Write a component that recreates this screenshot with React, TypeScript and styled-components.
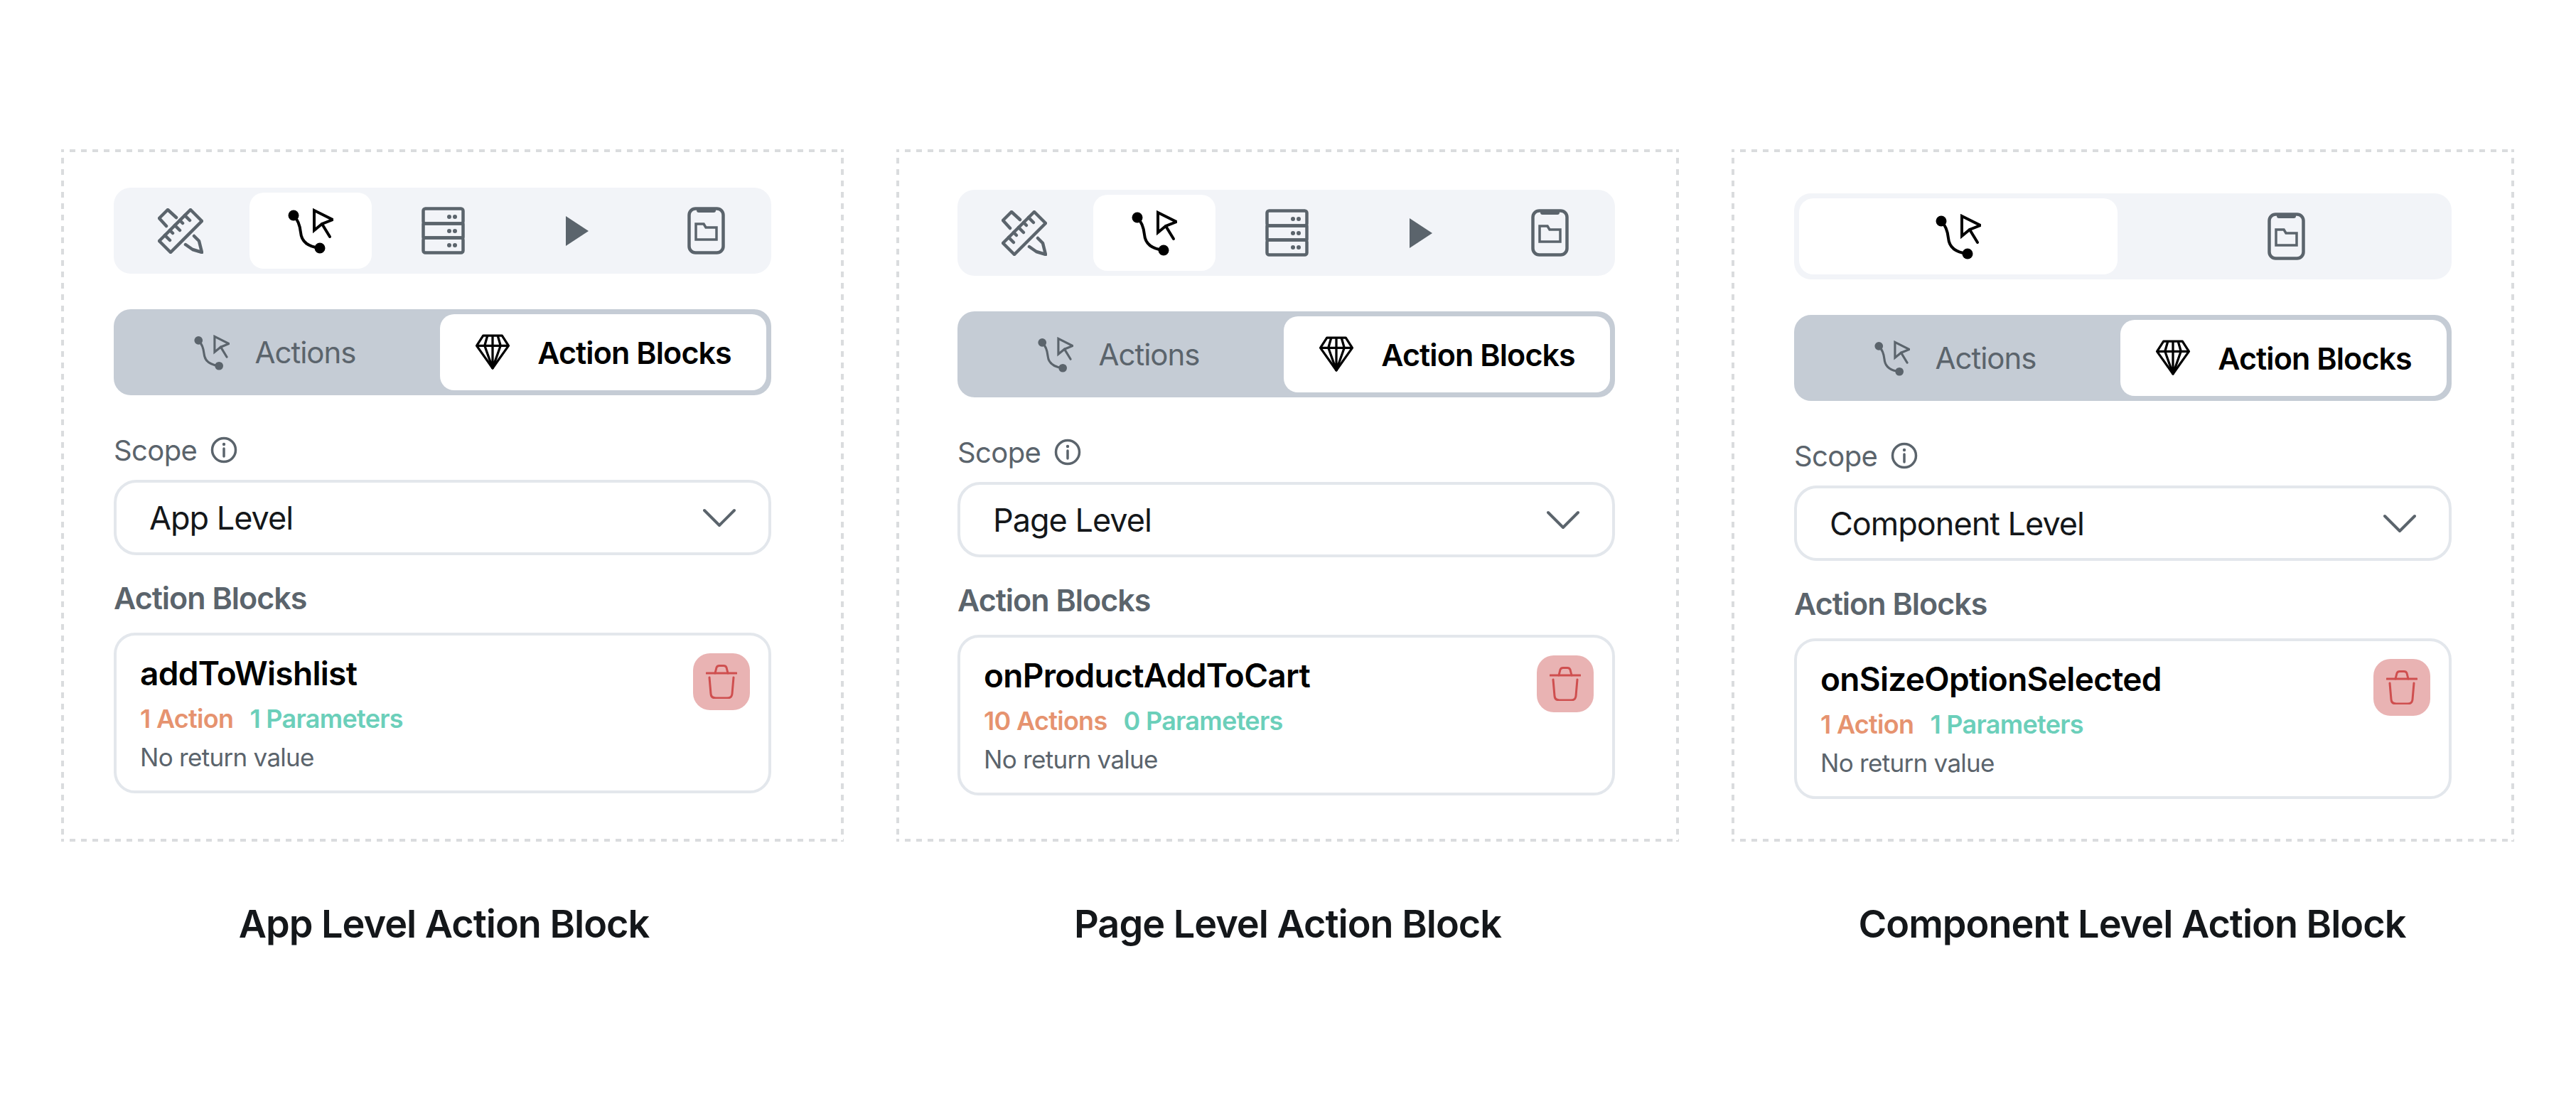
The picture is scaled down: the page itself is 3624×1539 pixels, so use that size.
import React from "react";
import styled, { createGlobalStyle } from "styled-components";

const Global = createGlobalStyle`
  html, body { margin: 0; padding: 0; background: #fff; }
  body { font-family: Inter, "Liberation Sans", sans-serif; width: 3624px; height: 1539px; overflow: hidden; }
`;

const Page = styled.div`
  display: flex;
  gap: 74px;
  padding: 210px 0 0 86px;
`;
const Column = styled.section`
  width: 1101px;
  display: flex;
  flex-direction: column;
`;
const Panel = styled.div<{ $pl: number; $pt: number }>`
  box-sizing: border-box;
  height: 974px;
  padding: ${(p) => p.$pt}px 0 0 ${(p) => p.$pl}px;
  display: flex;
  flex-direction: column;
  background:
    repeating-linear-gradient(90deg, #dadcde 0 4px, transparent 4px 12px, #dadcde 12px 16px) top / 100% 4px no-repeat,
    repeating-linear-gradient(90deg, #dadcde 0 4px, transparent 4px 12px, #dadcde 12px 16px) bottom / 100% 4px no-repeat,
    repeating-linear-gradient(180deg, #dadcde 0 4px, transparent 4px 12px, #dadcde 12px 16px) left / 4px 100% no-repeat,
    repeating-linear-gradient(180deg, #dadcde 0 4px, transparent 4px 12px, #dadcde 12px 16px) right / 4px 100% no-repeat;
`;
const Content = styled.div`
  width: 925px;
  display: flex;
  flex-direction: column;
`;
const Caption = styled.h2<{ $shift: number }>`
  margin: 81px 0 0 ${(p) => p.$shift}px;
  font-size: 54px;
  line-height: 70px;
  font-weight: 600;
  letter-spacing: -1px;
  color: #14171a;
  text-align: center;
`;
const Toolbar = styled.div`
  box-sizing: border-box;
  height: 121px;
  background: #f2f4f8;
  border-radius: 24px;
  padding: 7px 0 7px 8px;
  display: flex;
`;
const ToolbarTwo = styled(Toolbar)`
  padding: 7px;
  display: grid;
  grid-template-columns: 448px 1fr;
  gap: 11px;
`;
const Tab = styled.div<{ $active?: boolean; $ml?: number }>`
  width: ${(p) => (p.$ml === undefined ? "auto" : "172px")};
  margin-left: ${(p) => p.$ml ?? 0}px;
  flex: none;
  border-radius: 20px;
  background: ${(p) => (p.$active ? "#fff" : "transparent")};
  display: flex;
  align-items: center;
  justify-content: center;
`;
const Segmented = styled.div`
  box-sizing: border-box;
  height: 121px;
  margin-top: 50px;
  background: #c5ccd5;
  border-radius: 24px;
  padding: 7px;
  display: grid;
  grid-template-columns: 452px 1fr;
`;
const SegInactive = styled.div`
  display: flex;
  align-items: center;
  justify-content: center;
  gap: 35px;
  padding-right: 12px;
  font-size: 42px;
  font-weight: 400;
  letter-spacing: -1px;
  color: #5b646c;
`;
const SegActive = styled.div`
  display: flex;
  align-items: center;
  justify-content: center;
  gap: 38px;
  background: #fff;
  border-radius: 20px;
  font-size: 43px;
  font-weight: 600;
  letter-spacing: -0.9px;
  color: #000;
`;
const ScopeRow = styled.div`
  margin-top: 52px;
  height: 50px;
  display: flex;
  align-items: center;
  gap: 19px;
  font-size: 40px;
  letter-spacing: -0.6px;
  color: #5b646c;
`;
const Select = styled.div`
  box-sizing: border-box;
  height: 106px;
  margin-top: 17px;
  border: 4px solid #e3e7ec;
  border-radius: 32px;
  padding: 0 46px 0 46px;
  display: flex;
  align-items: center;
  justify-content: space-between;
  font-size: 45px;
  letter-spacing: -1px;
  color: #14171a;
`;
const SectionLabel = styled.div`
  margin-top: 35px;
  height: 50px;
  line-height: 50px;
  font-size: 43px;
  font-weight: 600;
  letter-spacing: -1px;
  color: #5b646c;
`;
const Card = styled.div`
  box-sizing: border-box;
  height: 226px;
  margin-top: 24px;
  border: 4px solid #e3e7ec;
  border-radius: 30px;
  padding: 23px 26px 0 33px;
  display: flex;
  justify-content: space-between;
  align-items: flex-start;
`;
const CardBody = styled.div`
  display: flex;
  flex-direction: column;
`;
const CardTitle = styled.div`
  font-size: 46px;
  line-height: 60px;
  font-weight: 600;
  letter-spacing: -0.7px;
  color: #000;
`;
const Stats = styled.div`
  margin-top: 12px;
  display: flex;
  gap: 23px;
  font-size: 36px;
  line-height: 44px;
  font-weight: 600;
  letter-spacing: -0.7px;
`;
const Stat = styled.span<{ $c: string }>`
  color: ${(p) => p.$c};
`;
const Note = styled.div`
  margin-top: 10px;
  font-size: 35px;
  line-height: 44px;
  letter-spacing: -0.7px;
  color: #5b646c;
`;
const Delete = styled.div`
  width: 80px;
  height: 80px;
  margin-top: 2px;
  border-radius: 24px;
  background: #e9b3b3;
  display: flex;
  align-items: center;
  justify-content: center;
`;

const RulerIcon = () => (
  <svg width="64" height="64" viewBox="0 0 64 64" fill="none" stroke="#5b646c" strokeWidth="4.5" strokeLinejoin="round" strokeLinecap="round">
    <path d="M46 2L62 18L18 62L2 46Z" />
    <path d="M38 10l7 7M31 17l4 4M24 24l7 7M17 31l4 4M10 38l7 7" />
    <path d="M12 25L2 14L14 2L26 13" />
    <path d="M51 39L58 46L62 62L49 58L39 51" />
  </svg>
);
const FlowIcon = ({ size = 64, color = "#000" }: { size?: number; color?: string }) => (
  <svg width={size} height={size} viewBox="0 0 64 64" fill="none" stroke={color} strokeWidth="4" strokeLinecap="round" strokeLinejoin="miter">
    <circle cx="8" cy="10" r="7.5" fill={color} stroke="none" />
    <circle cx="45" cy="56" r="7.5" fill={color} stroke="none" />
    <path d="M8 10C14 16 17 24 18 34C19 46 28 54 45 56" />
    <path d="M37 3L63 16L48 22L37 31Z" />
    <path d="M48 22L59 40" />
  </svg>
);
const ServerIcon = () => (
  <svg width="61" height="67" viewBox="0 0 61 67" fill="none" stroke="#5b646c" strokeWidth="4.5">
    <rect x="2.5" y="2.5" width="56" height="21" rx="3" />
    <rect x="2.5" y="23.5" width="56" height="20" rx="1" />
    <rect x="2.5" y="43.5" width="56" height="21" rx="3" />
    <g fill="#5b646c" stroke="none">
      <circle cx="39" cy="14" r="3" /><circle cx="47" cy="14" r="3" />
      <circle cx="39" cy="34" r="3" /><circle cx="47" cy="34" r="3" />
      <circle cx="39" cy="54" r="3" /><circle cx="47" cy="54" r="3" />
    </g>
  </svg>
);
const PlayIcon = () => (
  <svg width="32" height="42" viewBox="0 0 32 42"><path d="M0 0L32 21L0 42Z" fill="#5b646c" /></svg>
);
const PhoneIcon = () => (
  <svg width="53" height="67" viewBox="0 0 53 67" fill="none" stroke="#5b646c" strokeWidth="4.5">
    <rect x="2.5" y="2.5" width="48" height="62" rx="9" />
    <path d="M13 1H40V5Q40 8 37 8H16Q13 8 13 5Z" fill="#5b646c" stroke="none" />
    <path d="M12 24H23L26 29H41V46H12Z" strokeWidth="3.5" />
  </svg>
);
const DiamondIcon = () => (
  <svg width="50" height="51" viewBox="0 0 48 50" fill="none" stroke="#000" strokeWidth="3.2" strokeLinejoin="round">
    <path d="M11 2H37L46 16L24 47L2 16Z" />
    <path d="M2 16H46M17 2L13 16L24 47L35 16L31 2M24 2V47" />
  </svg>
);
const InfoIcon = () => (
  <svg width="38" height="38" viewBox="0 0 38 38" fill="none" stroke="#5b646c" strokeWidth="3.5" strokeLinecap="round">
    <circle cx="19" cy="19" r="16.5" />
    <path d="M19 17V28" />
    <circle cx="19" cy="11" r="2.2" fill="#5b646c" stroke="none" />
  </svg>
);
const ChevronIcon = () => (
  <svg width="46" height="27" viewBox="0 0 46 27" fill="none" stroke="#5b646c" strokeWidth="4" strokeLinecap="round" strokeLinejoin="round">
    <path d="M2 3L23 24L44 3" />
  </svg>
);
const TrashIcon = () => (
  <svg width="44" height="48" viewBox="0 0 44 48" fill="none" stroke="#cf4f4f" strokeWidth="3" strokeLinecap="round" strokeLinejoin="round">
    <path d="M1 12H43" />
    <path d="M13 12L15 4Q16 1.5 19 1.5H25Q28 1.5 29 4L31 12" />
    <path d="M5 18L7 41Q7.5 47 14 47H30Q36.5 47 37 41L39 18" />
  </svg>
);

type Data = {
  caption: string;
  level: string;
  name: string;
  actions: string;
  params: string;
  pl: number;
  pt: number;
  shift: number;
  two?: boolean;
};

const panels: Data[] = [
  { caption: "App Level Action Block", level: "App Level", name: "addToWishlist", actions: "1 Action", params: "1 Parameters", pl: 74, pt: 54, shift: -24 },
  { caption: "Page Level Action Block", level: "Page Level", name: "onProductAddToCart", actions: "10 Actions", params: "0 Parameters", pl: 86, pt: 57, shift: 0 },
  { caption: "Component Level Action Block", level: "Component Level", name: "onSizeOptionSelected", actions: "1 Action", params: "1 Parameters", pl: 88, pt: 62, shift: 26, two: true },
];

export default function App() {
  return (
    <Page>
      <Global />
      {panels.map((d) => (
        <Column key={d.caption}>
          <Panel $pl={d.pl} $pt={d.pt}>
            <Content>
              {d.two ? (
                <ToolbarTwo>
                  <Tab $active><FlowIcon /></Tab>
                  <Tab><PhoneIcon /></Tab>
                </ToolbarTwo>
              ) : (
                <Toolbar>
                  <Tab $ml={0}><RulerIcon /></Tab>
                  <Tab $ml={11} $active><FlowIcon /></Tab>
                  <Tab $ml={14}><ServerIcon /></Tab>
                  <Tab $ml={17}><PlayIcon /></Tab>
                  <Tab $ml={9}><PhoneIcon /></Tab>
                </Toolbar>
              )}
              <Segmented>
                <SegInactive><FlowIcon size={50} color="#5b646c" />Actions</SegInactive>
                <SegActive><DiamondIcon />Action Blocks</SegActive>
              </Segmented>
              <ScopeRow>Scope<InfoIcon /></ScopeRow>
              <Select>{d.level}<ChevronIcon /></Select>
              <SectionLabel>Action Blocks</SectionLabel>
              <Card>
                <CardBody>
                  <CardTitle>{d.name}</CardTitle>
                  <Stats>
                    <Stat $c="#e6936f">{d.actions}</Stat>
                    <Stat $c="#6bcfba">{d.params}</Stat>
                  </Stats>
                  <Note>No return value</Note>
                </CardBody>
                <Delete><TrashIcon /></Delete>
              </Card>
            </Content>
          </Panel>
          <Caption $shift={d.shift}>{d.caption}</Caption>
        </Column>
      ))}
    </Page>
  );
}
